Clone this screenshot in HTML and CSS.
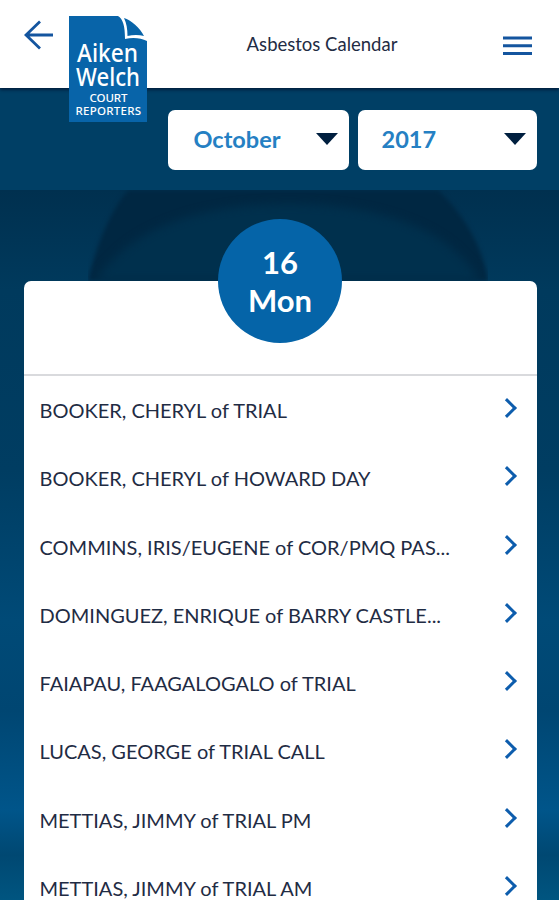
FILE: index.html
```html
<!DOCTYPE html>
<html lang="en">
<head>
    <meta charset="UTF-8">
    <meta name="viewport" content="width=device-width, initial-scale=1.0">
    <title>Asbestos Calendar</title>
    <link rel="stylesheet" href="styles.css">
</head>
<body>
    <header class="header">
        <button class="icon-button back" aria-label="Back">
            <svg width="30" height="30" viewBox="0 0 30 30"><path d="M29 15H2M16 1.5L2 15l14 13.5"/></svg>
        </button>
        <svg class="logo" width="78" height="106" viewBox="0 0 78 106">
            <path class="logo-page" d="M0 0H49C54 3 56 10 56 23C64 21 72 22 78 25V106H0Z"/>
            <path class="logo-fold" d="M55 2C62 4 71 12 75 20C70 18.500 64 18.500 58.500 20C58.500 13 57.500 7 55 2Z"/>
            <text class="logo-name" x="8" y="46" textLength="61" lengthAdjust="spacingAndGlyphs">Aiken</text>
            <text class="logo-name" x="7" y="70" textLength="64" lengthAdjust="spacingAndGlyphs">Welch</text>
            <text class="logo-sub" x="20.500" y="86" textLength="38" lengthAdjust="spacing">COURT</text>
            <text class="logo-sub" x="6.500" y="98.500" textLength="65.500" lengthAdjust="spacing">REPORTERS</text>
        </svg>
        <h1 class="title">Asbestos Calendar</h1>
        <button class="icon-button menu" aria-label="Menu">
            <svg width="29" height="20" viewBox="0 0 29 20"><path d="M0 2H29M0 9.700H29M0 17.500H29"/></svg>
        </button>
    </header>

    <div class="filters">
        <button class="select month">October<span class="arrow"></span></button>
        <button class="select year">2017<span class="arrow"></span></button>
    </div>

    <main class="calendar">
        <svg class="dome" width="400" height="91" viewBox="0 0 400 91">
            <path class="dome-outer" d="M0 91C8 55 22 22 40 0H350C378 27 395 58 400 91Z"/>
            <path class="dome-inner" d="M8 91C38 42 105 14 200 14C290 14 362 38 392 91Z"/>
        </svg>
        <section class="card">
            <div class="card-top">
                <div class="date"><span>16</span><span>Mon</span></div>
            </div>
            <ul class="list">
                <li class="item"><span>BOOKER, CHERYL of TRIAL</span><i class="chevron"></i></li>
                <li class="item"><span>BOOKER, CHERYL of HOWARD DAY</span><i class="chevron"></i></li>
                <li class="item"><span>COMMINS, IRIS/EUGENE of COR/PMQ PAS...</span><i class="chevron"></i></li>
                <li class="item"><span>DOMINGUEZ, ENRIQUE of BARRY CASTLE...</span><i class="chevron"></i></li>
                <li class="item"><span>FAIAPAU, FAAGALOGALO of TRIAL</span><i class="chevron"></i></li>
                <li class="item"><span>LUCAS, GEORGE of TRIAL CALL</span><i class="chevron"></i></li>
                <li class="item"><span>METTIAS, JIMMY of TRIAL PM</span><i class="chevron"></i></li>
                <li class="item"><span>METTIAS, JIMMY of TRIAL AM</span><i class="chevron"></i></li>
            </ul>
        </section>
    </main>
</body>
</html>
```
FILE: styles.css
```css
* {
    box-sizing: border-box;
}

body {
    display: flex;
    flex-direction: column;
    height: 100vh;
    margin: 0;
    overflow: hidden;
    font-family: Lato, sans-serif;
    color: #1f2c44;
    background-color: #003e63;
}

button {
    border: none;
    padding: 0;
    font-family: inherit;
    cursor: pointer;
}

/* Header */
.header {
    display: flex;
    align-items: flex-start;
    flex: none;
    height: 88px;
    padding: 0 27px 0 24px;
    background-color: white;
    position: relative;
    z-index: 1;
    box-shadow: 0 2px 3px #001f3f;
}

.icon-button {
    display: flex;
    background: none;
}

.icon-button path {
    fill: none;
    stroke: #14559f;
    stroke-width: 3;
}

.back {
    margin-top: 20px;
}

.back path {
    stroke-width: 2.8;
}

.menu {
    margin-top: 36px;
}

.logo {
    flex: none;
    margin: 16px 0 0 15px;
}

.logo-page,
.logo-fold {
    fill: #0864a9;
}

.logo text {
    fill: white;
    font-family: "Noto Sans", sans-serif;
    font-weight: 500;
}

.logo .logo-name {
    font-size: 25px;
}

.logo .logo-sub {
    font-size: 11.5px;
}

.title {
    flex: 1;
    margin: 33px 0 0 -6px;
    font-size: 18.5px;
    line-height: 23px;
    font-weight: 400;
    text-align: center;
}

/* Month and year pickers */
.filters {
    display: flex;
    justify-content: flex-end;
    gap: 9px;
    flex: none;
    height: 102px;
    padding: 22px 22.5px 20px;
    background-color: #003f65;
}

.select {
    display: flex;
    align-items: center;
    justify-content: space-between;
    width: 181px;
    padding: 0 11px 2px 26px;
    background-color: white;
    border-radius: 7px;
    color: #2580c3;
    font-size: 23.5px;
    font-weight: 700;
}

.year {
    width: 179px;
    padding-left: 24px;
}

.arrow {
    border: 11px solid transparent;
    border-top: 12px solid #001f3f;
    border-bottom: 0;
}

/* Calendar */
.calendar {
    flex: 1;
    min-height: 0;
    position: relative;
    padding: 91px 22.5px 0 23.5px;
    background: linear-gradient(#00304f 0, #003a5d 100px, #003d62 280px, #004a77 430px, #004672 520px, #00558a 620px, #004872 665px, #005580 100%);
}

.dome {
    position: absolute;
    top: 0;
    left: 88px;
}

.dome-outer {
    fill: #002742;
    filter: blur(2px);
}

.dome-inner {
    fill: #00304d;
    filter: blur(5px);
}

.card {
    height: 100%;
    background-color: white;
    border-radius: 7px 7px 0 0;
    position: relative;
}

.card-top {
    display: flex;
    justify-content: center;
    height: 95px;
    border-bottom: 2px solid #d9dadd;
}

.date {
    display: flex;
    flex-direction: column;
    align-items: center;
    justify-content: center;
    width: 124px;
    height: 124px;
    margin-top: -62px;
    background-color: #0564a8;
    border-radius: 50%;
    color: white;
    font-size: 31px;
    line-height: 38px;
    font-weight: 700;
}

.list {
    margin: 0;
    padding: 0;
    list-style: none;
}

.item {
    display: flex;
    align-items: center;
    justify-content: space-between;
    height: 68.25px;
    padding: 0 23px 0 16px;
    font-size: 20px;
    white-space: nowrap;
}

.chevron {
    width: 14px;
    height: 14px;
    margin-top: -4px;
    border: solid #0d5dad;
    border-width: 3px 3px 0 0;
    transform: rotate(45deg);
}
```
